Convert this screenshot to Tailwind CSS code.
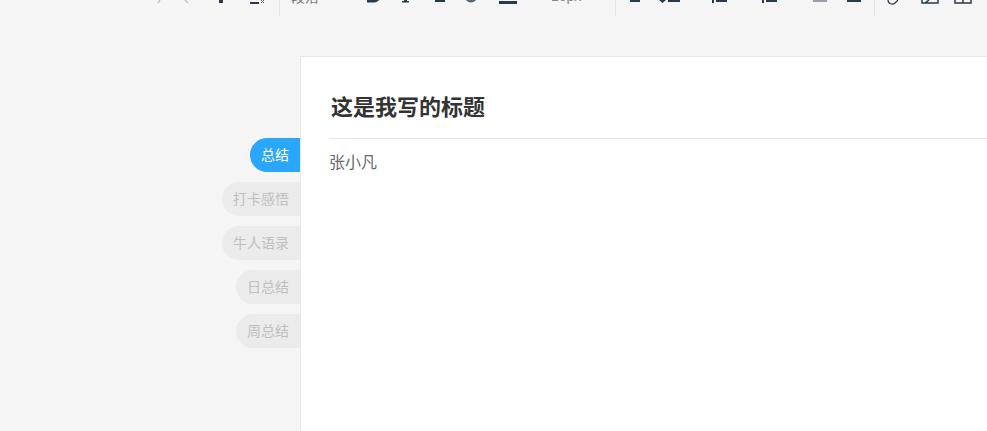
<!DOCTYPE html>
<html lang="zh">
<head>
    <meta charset="UTF-8">
    <meta name="viewport" content="width=device-width, initial-scale=1.0">
    <title>编辑</title>
    <script src="https://cdn.jsdelivr.net/npm/@tailwindcss/browser@4"></script>
</head>
<body class="bg-[#f5f5f5] h-[431px] w-[987px] overflow-hidden font-['Microsoft_YaHei','Noto_Sans_CJK_SC',sans-serif]">
    <!-- toolbar, scrolled so that only the bottom of the icons shows -->
    <div class="flex items-start h-4 overflow-hidden text-[#2b3a4a]">
        <svg class="ml-[157px] w-[10px] h-[5px]" viewBox="0 0 10 5" fill="none" stroke="#c4c4c4" stroke-width="1.5"><path d="M1 3 L3 0"/></svg>
        <svg class="ml-[16px] w-[10px] h-[5px]" viewBox="0 0 10 5" fill="none" stroke="#c4c4c4" stroke-width="1.5"><path d="M2 0 L5 3"/></svg>
        <div class="ml-[26px] w-[4px] h-[3px] bg-[#2b3a4a]"></div>
        <svg class="ml-[27px] w-[16px] h-[5px]" viewBox="0 0 16 5" fill="none"><path d="M0 3H9" stroke="#2b3a4a" stroke-width="2"/><path d="M11 0L14 3M14 0L11 3" stroke="#666" stroke-width="1"/></svg>
        <div class="ml-[13px] w-px h-4 bg-[#e6e6e6]"></div>
        <div class="ml-[11px] w-[60px] -mt-[14px] text-[14px] leading-[20px] text-[#777]">段落</div>
        <svg class="ml-[16px] w-[13px] h-[3px]" viewBox="0 0 13 3"><path d="M0 0H12C11 1.5 9 2.5 7 2.5H0Z" fill="#2b3a4a"/></svg>
        <svg class="ml-[21px] w-[9px] h-[3px]" viewBox="0 0 9 3"><path d="M3 0H6V1H8V2.5H1V1H3Z" fill="#2b3a4a"/></svg>
        <div class="ml-[25px] w-[10px] h-[2px] bg-[#2b3a4a]"></div>
        <svg class="ml-[21px] w-[10px] h-[3px]" viewBox="0 0 10 3"><path d="M0 0H10C9 1.5 7 2.5 5 2.5S1 1.5 0 0Z" fill="#5a6672"/></svg>
        <div class="ml-[23px] mt-[1px] w-[18px] h-[3px] bg-[#2b3a4a]"></div>
        <div class="ml-[34px] w-[39px] -mt-[14px] text-[14px] leading-[20px] text-[#888] font-['Liberation_Sans',sans-serif]">16px</div>
        <div class="ml-[25px] w-px h-4 bg-[#e6e6e6]"></div>
        <div class="ml-[14px] w-[10px] h-[2px] bg-[#2b3a4a]"></div>
        <svg class="ml-[19px] w-[21px] h-[3px]" viewBox="0 0 21 3"><path d="M0 0H7L3.5 3Z M9 0H21V2H9Z" fill="#2b3a4a"/></svg>
        <svg class="ml-[31px] w-[16px] h-[3px]" viewBox="0 0 16 3"><path d="M1 0H3V3H1Z M5 0H16V2H5Z" fill="#2b3a4a"/></svg>
        <svg class="ml-[34px] w-[16px] h-[3px]" viewBox="0 0 16 3"><path d="M1 0H3V3H1Z M5 0H16V2H5Z" fill="#2b3a4a"/></svg>
        <div class="ml-[36px] w-[14px] h-[2px] bg-[#9a9ea6]"></div>
        <div class="ml-[20px] w-[14px] h-[2px] bg-[#2b3a4a]"></div>
        <div class="ml-[13px] w-px h-4 bg-[#e6e6e6]"></div>
        <svg class="ml-[12px] w-[12px] h-[5px]" viewBox="0 0 12 5" fill="none" stroke="#2b3a4a" stroke-width="1.2"><path d="M1 0C1 4 6 5 8 3L11 0"/></svg>
        <svg class="ml-[22px] w-[18px] h-[4px]" viewBox="0 0 18 4" fill="none" stroke="#2b3a4a" stroke-width="1.5"><path d="M1 0V3H17V0M4 3L8 0"/></svg>
        <svg class="ml-[15px] w-[18px] h-[4px]" viewBox="0 0 18 4" fill="none" stroke="#2b3a4a" stroke-width="1.5"><path d="M1 0V3H17V0M9 0V3"/></svg>
    </div>

    <div class="flex mt-10 h-[375px]">
        <!-- tabs hanging off the left edge of the card -->
        <div class="w-[300px] shrink-0 flex flex-col items-end gap-[10px] pt-[82px] text-[14px] leading-[32px] text-[#bfbfbf]">
            <a class="h-[34px] px-[11px] rounded-l-[17px] bg-[#2aa6fb] text-white">总结</a>
            <a class="h-[34px] px-[11px] rounded-l-[17px] bg-[#ebebeb]">打卡感悟</a>
            <a class="h-[34px] px-[11px] rounded-l-[17px] bg-[#ebebeb]">牛人语录</a>
            <a class="h-[34px] px-[11px] rounded-l-[17px] bg-[#ebebeb]">日总结</a>
            <a class="h-[34px] px-[11px] rounded-l-[17px] bg-[#ebebeb]">周总结</a>
        </div>
        <div class="flex-1 bg-white border-l border-t border-[#e8e8e8] pl-[29px]">
            <h1 class="pl-px pt-[31px] pb-[16px] border-b border-[#e5e5e5] text-[22px] leading-[34px] font-bold text-[#333]">这是我写的标题</h1>
            <p class="mt-[10px] -ml-px text-[16px] leading-[24px] text-[#666]">张小凡</p>
        </div>
    </div>
</body>
</html>
